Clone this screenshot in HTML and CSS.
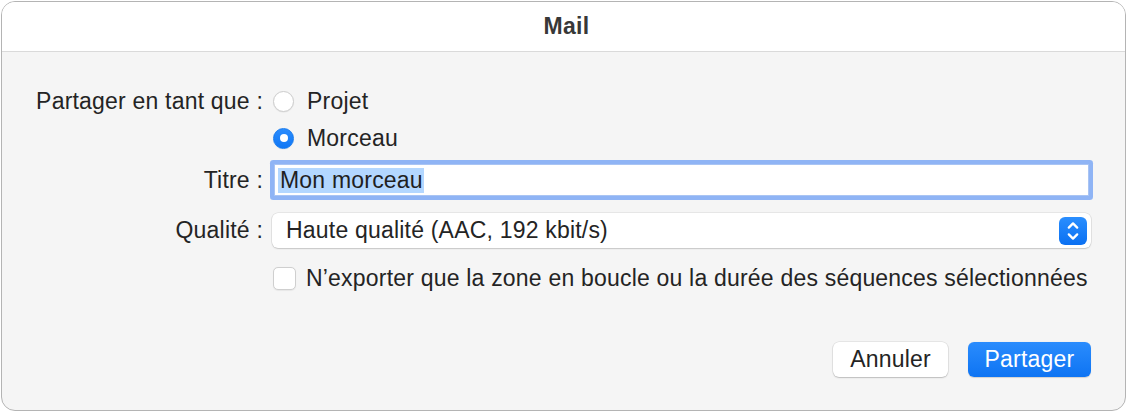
FILE: index.html
```html
<!DOCTYPE html>
<html lang="fr">
<head>
<meta charset="utf-8">
<title>Mail</title>
<link rel="stylesheet" href="styles.css">
</head>
<body>
<div class="window">
  <header class="titlebar">Mail</header>
  <main class="content">
    <div class="row r1">
      <span class="label">Partager en tant que :</span>
      <label class="opt"><span class="radio"></span><span>Projet</span></label>
    </div>
    <div class="row r2">
      <span class="label"></span>
      <label class="opt"><span class="radio on"></span><span>Morceau</span></label>
    </div>
    <div class="row r3">
      <span class="label">Titre :</span>
      <div class="field"><span class="sel">Mon morceau</span></div>
    </div>
    <div class="row r4">
      <span class="label">Qualité :</span>
      <div class="popup">
        <span class="popup-text">Haute qualité (AAC, 192 kbit/s)</span>
        <span class="stepper">
          <svg width="28" height="28" viewBox="0 0 28 28" fill="none" stroke="#fff" stroke-width="2.3" stroke-linecap="round" stroke-linejoin="round">
            <path d="M9.8 10.6 L14 6.4 L18.2 10.6"/>
            <path d="M9.8 17.4 L14 21.6 L18.2 17.4"/>
          </svg>
        </span>
      </div>
    </div>
    <div class="row r5">
      <span class="label"></span>
      <label class="opt check"><span class="checkbox"></span><span>N’exporter que la zone en boucle ou la durée des séquences sélectionnées</span></label>
    </div>
    <div class="buttons">
      <button class="btn">Annuler</button>
      <button class="btn primary">Partager</button>
    </div>
  </main>
</div>
</body>
</html>
```

FILE: styles.css
```css
* { box-sizing: border-box; }
html, body { margin: 0; padding: 0; background: #ffffff; }
body {
  font-family: "Liberation Sans", Arial, sans-serif;
  font-size: 23px;
  letter-spacing: 0.2px;
  color: #242424;
}
.window {
  margin: 1px 0 0 1px;
  width: 1125px;
  height: 410px;
  border: 1px solid #b4b4b4;
  border-radius: 14px;
  background: #f5f5f5;
  overflow: hidden;
  display: flex;
  flex-direction: column;
}
.titlebar {
  height: 50px;
  flex: none;
  background: #ffffff;
  border-bottom: 1px solid #dadada;
  display: flex;
  align-items: center;
  justify-content: center;
  font-weight: bold;
  color: #383838;
  padding-left: 6px;
  letter-spacing: 0.3px;
}
.content {
  flex: 1;
  padding: 35px 34px 0 0;
  display: flex;
  flex-direction: column;
}
.row {
  display: flex;
  align-items: center;
  gap: 9px;
}
.label {
  width: 261px;
  flex: none;
  text-align: right;
  white-space: nowrap;
}
.r1, .r2 { height: 28px; }
.r2 { margin-top: 9px; }
.r3 { height: 32px; margin-top: 12px; }
.r4 { height: 35px; margin-top: 17px; }
.r5 { height: 24px; margin-top: 18px; }
.opt {
  display: flex;
  align-items: center;
  gap: 13px;
  padding-left: 1px;
}
.opt.check { gap: 10px; }
.radio {
  width: 21px;
  height: 21px;
  border-radius: 50%;
  background: #ffffff;
  border: 1px solid #cdcdcd;
  box-shadow: 0 0.5px 1px rgba(0,0,0,0.08);
  display: flex;
  align-items: center;
  justify-content: center;
  flex: none;
}
.radio.on {
  background: linear-gradient(#2b8cfd, #0f77f5);
  border-color: #1479ee;
}
.radio.on::after {
  content: "";
  width: 8px;
  height: 8px;
  border-radius: 50%;
  background: #ffffff;
}
.checkbox {
  width: 23px;
  height: 23px;
  border-radius: 5px;
  background: #ffffff;
  border: 1px solid #cfcfcf;
  box-shadow: 0 0.5px 1px rgba(0,0,0,0.06);
  flex: none;
}
.field {
  flex: 1;
  height: 32px;
  margin: 0 2px;
  background: #ffffff;
  border: 1px solid #a9c4f3;
  box-shadow: 0 0 0 4px #8fb4f5;
  border-radius: 1px;
  display: flex;
  align-items: center;
  padding-left: 3px;
}
.sel {
  background: #b3d7ff;
  padding: 0 1px 0 2px;
  line-height: 25px;
  color: #1f1f1f;
}
.popup {
  flex: 1;
  height: 35px;
  background: #ffffff;
  border-radius: 6px;
  box-shadow: 0 0 0 0.5px rgba(0,0,0,0.12), 0 1px 1.5px rgba(0,0,0,0.14);
  display: flex;
  align-items: center;
  justify-content: space-between;
  padding: 0 4px 0 14px;
}
.stepper {
  width: 28px;
  height: 28px;
  border-radius: 6px;
  background: linear-gradient(#2a8efe, #0a70f2);
  display: flex;
}
.buttons {
  display: flex;
  justify-content: flex-end;
  gap: 20px;
  margin-top: 52px;
}
.btn {
  font: inherit;
  letter-spacing: 0.2px;
  height: 35px;
  border: none;
  border-radius: 6px;
  background: #ffffff;
  color: #242424;
  box-shadow: 0 0 0 0.5px rgba(0,0,0,0.12), 0 1px 1.5px rgba(0,0,0,0.18);
  padding: 0;
  width: 115px;
}
.btn.primary {
  width: 123px;
  background: linear-gradient(#2a8cfd, #0e74f3);
  color: #ffffff;
  box-shadow: 0 0.5px 1px rgba(0,0,0,0.15);
}
```
